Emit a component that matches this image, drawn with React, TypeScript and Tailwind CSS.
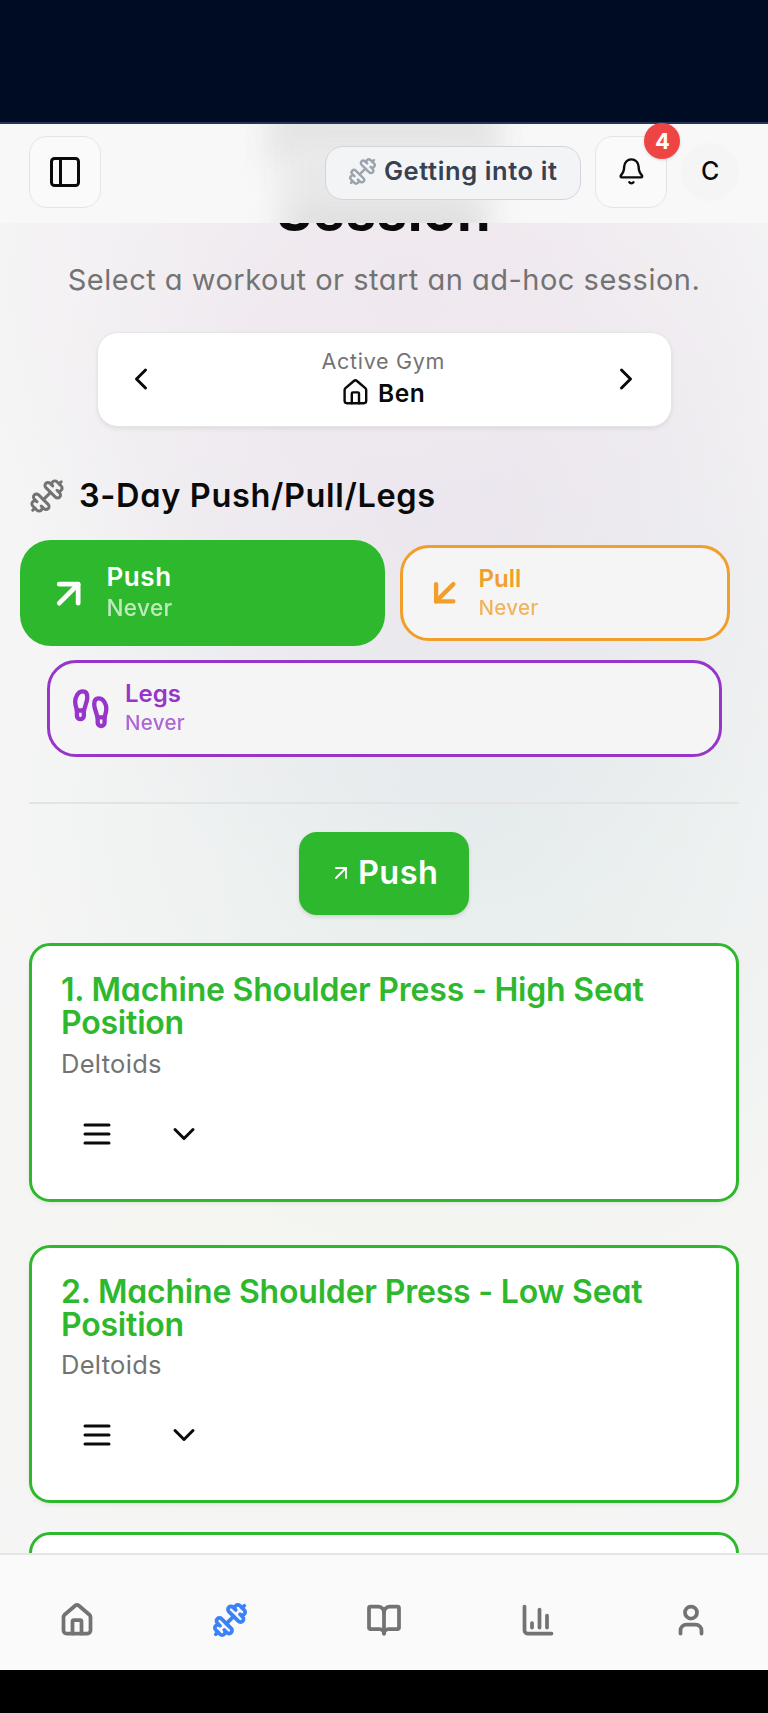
import type { ReactNode } from 'react';
import {
  ArrowDownLeft,
  ArrowUpRight,
  Bell,
  BookOpen,
  ChartColumn,
  ChevronDown,
  ChevronLeft,
  ChevronRight,
  Dumbbell,
  Footprints,
  House,
  PanelLeft,
  User,
} from 'lucide-react';

function MenuIcon() {
  return (
    <svg width="36" height="36" viewBox="0 0 24 24" fill="none" stroke="currentColor" strokeWidth="2" strokeLinecap="round">
      <path d="M4 6h16M4 12h16M4 18h16" />
    </svg>
  );
}

function Header() {
  return (
    <header className="relative flex h-[99px] shrink-0 items-start bg-[#f8f8f9] pr-[29px] pl-[29px] pt-[12px]">
      <div className="absolute inset-0 overflow-hidden">
        <div className="absolute top-[-24px] left-[268px] h-[64px] w-[232px] bg-[#e4e4e4] blur-[16px]" />
        <div className="absolute top-[20px] left-[286px] h-[60px] w-[196px] bg-[#e9e9e9] blur-[16px]" />
        <div className="absolute top-[74px] left-[284px] h-[50px] w-[202px] bg-[#dfdfdf] blur-[16px]" />
      </div>
      <button className="relative flex h-[72px] w-[72px] items-center justify-center rounded-[18px] border-[1.5px] border-[#e5e5e5] bg-[#fafafa]">
        <PanelLeft size={36} strokeWidth={2} />
      </button>
      <div className="relative mt-[9.5px] ml-auto flex h-[54px] w-[256px] items-center rounded-[18px] border-[1.5px] border-[#d1d5db] bg-[#f3f4f6] pl-[22px] text-[#374151]">
        <Dumbbell size={29} strokeWidth={2} className="mt-[-2px] shrink-0 text-[#9ca3af]" />
        <span className="mt-[-3px] ml-[6.5px] text-[25.5px] leading-[34px] font-semibold tracking-[0.6px] whitespace-nowrap">Getting into it</span>
      </div>
      <button className="relative ml-[14px] flex h-[72px] w-[72px] items-center justify-center rounded-[18px] border-[1.5px] border-[#e5e5e5] bg-[#fafafa]">
        <Bell size={28.8} strokeWidth={2} className="mt-[-1px]" />
        <span className="absolute top-[-14px] right-[-14px] flex h-[36px] w-[36px] items-center justify-center rounded-full bg-[#ef4444] text-[22px] leading-none font-bold text-white shadow-[0_1px_3px_rgba(0,0,0,0.15)]">
          4
        </span>
      </button>
      <div className="relative mt-[7px] ml-[14px] flex h-[57.6px] w-[57.6px] items-center justify-center rounded-full bg-[#f5f5f5] text-[25px] leading-none font-medium">
        C
      </div>
    </header>
  );
}

function GymPicker() {
  return (
    <section className="mx-auto mt-[32px] flex h-[95px] w-[575px] shrink-0 items-center justify-between rounded-[21px] border-[1.5px] border-[#e5e5e5] bg-white pr-[26.5px] pl-[25px] shadow-[0_2px_4px_rgba(0,0,0,0.07)]">
      <ChevronLeft size={36} strokeWidth={2} />
      <div className="mt-[-3px] flex flex-col items-center">
        <span className="text-[21.5px] leading-[30px] tracking-[0.7px] text-[#737373]">Active Gym</span>
        <span className="flex items-center gap-[8px] text-[24.5px] leading-[34px] font-semibold tracking-[0.5px]">
          <House size={28.8} strokeWidth={2} />
          Ben
        </span>
      </div>
      <ChevronRight size={36} strokeWidth={2} />
    </section>
  );
}

function SmallDay({ name, icon, className }: { name: string; icon: ReactNode; className: string }) {
  return (
    <button className={`flex h-[96.5px] shrink-0 items-start rounded-[29px] border-[3px] bg-[#f5f5f5] pl-[20.5px] text-left ${className}`}>
      <span className="mt-[24.5px] shrink-0">{icon}</span>
      <span className="mt-[16px] ml-[13.5px] flex flex-col">
        <span className="text-[24px] leading-[30px] font-semibold">{name}</span>
        <span className="mt-[1px] text-[20.5px] leading-[26px] font-medium tracking-[0.3px] opacity-75">Never</span>
      </span>
    </button>
  );
}

function ExerciseCard({ title, className }: { title: string; className: string }) {
  return (
    <article className={`mx-[29px] h-[258.5px] shrink-0 rounded-[21px] border-[3px] border-[#2eb82e] bg-white pl-[29px] shadow-[0_2px_4px_rgba(0,0,0,0.06)] ${className}`}>
      <h3 className="mt-[27px] text-[32px] leading-[33px] font-semibold tracking-[-0.2px] whitespace-pre-line text-[#2eb82e]">{title}</h3>
      <p className="mt-[5.5px] text-[25.5px] leading-[38px] tracking-[0.3px] text-[#737373]">Deltoids</p>
      <div className="mt-[33px] flex gap-[50.5px] pl-[18px]">
        <MenuIcon />
        <ChevronDown size={36} strokeWidth={2} />
      </div>
    </article>
  );
}

function BottomNav() {
  return (
    <nav className="grid h-[117px] shrink-0 grid-cols-5 justify-items-center border-t-2 border-[#e5e5e5] bg-[#fafafa] pt-[46.5px] text-[#737373]">
      <House size={36} strokeWidth={2.5} />
      <Dumbbell size={36} strokeWidth={2.5} className="text-[#3b82f6]" />
      <BookOpen size={36} strokeWidth={2.5} />
      <ChartColumn size={36} strokeWidth={2.5} />
      <User size={36} strokeWidth={2.5} />
    </nav>
  );
}

export default function App() {
  return (
    <div className="flex h-[1713px] w-[768px] flex-col overflow-hidden bg-black font-['Inter',sans-serif] text-[#0a0a0a] [font-feature-settings:'cv11']">
      <div className="h-[124px] shrink-0 border-b-2 border-[#26335a] bg-[#000c24]" />
      <Header />
      <main className="flex h-[1330px] shrink-0 flex-col overflow-hidden bg-[#f5f5f5] bg-[radial-gradient(ellipse_440px_420px_at_400px_60px,#f0e8ef_0%,#f0e8ef00_100%),radial-gradient(ellipse_440px_420px_at_460px_280px,#e8e5ed_0%,#e8e5ed00_100%),radial-gradient(ellipse_480px_460px_at_480px_590px,#e5edec_0%,#e5edec00_100%),radial-gradient(ellipse_620px_420px_at_340px_1020px,#f4f6f0_0%,#f4f6f000_100%)]">
        <h1 className="mt-[-38.5px] shrink-0 text-center text-[54px] leading-[54px] font-bold tracking-[0.8px]">Session</h1>
        <p className="mt-[21px] shrink-0 text-center text-[29px] leading-[40px] tracking-[0.5px] whitespace-nowrap text-[#737373]">
          Select a workout or start an ad-hoc session.
        </p>
        <GymPicker />
        <h2 className="mt-[51px] flex shrink-0 items-center text-[32.5px] leading-[36px] font-semibold tracking-[0.65px]">
          <Dumbbell size={36} strokeWidth={2} className="ml-[28.5px] text-[#737373]" />
          <span className="ml-[14.5px]">3-Day Push/Pull/Legs</span>
        </h2>
        <div className="mt-[26.5px] ml-[20px] flex shrink-0 items-center gap-[15px]">
          <button className="flex h-[106px] w-[365px] shrink-0 items-start rounded-[31px] bg-[#2eb82e] pl-[26px] text-left text-white">
            <ArrowUpRight size={45.4} strokeWidth={2.5} className="mt-[30.5px]" />
            <span className="mt-[21px] ml-[15px] flex flex-col">
              <span className="text-[26px] leading-[32px] font-semibold tracking-[0.6px]">Push</span>
              <span className="mt-[1px] text-[22.5px] leading-[28px] font-medium tracking-[0.4px] opacity-70">Never</span>
            </span>
          </button>
          <SmallDay name="Pull" className="w-[330px] border-[#f09f2b] text-[#f09f2b]" icon={<ArrowDownLeft size={41.5} strokeWidth={2.5} />} />
        </div>
        <SmallDay name="Legs" className="mx-[46.5px] mt-[14px] border-[#9735cb] text-[#9735cb]" icon={<Footprints size={41.5} strokeWidth={2.5} />} />
        <hr className="mx-[29px] mt-[45px] h-[2px] shrink-0 border-0 bg-[#e3e3e4]" />
        <div className="mx-auto mt-[28px] flex h-[83px] w-[170px] shrink-0 items-center rounded-[18px] bg-[#2eb82e] pl-[29.5px] text-[32.5px] leading-[36px] font-semibold text-white shadow-[0_2px_4px_rgba(0,0,0,0.12)]">
          <ArrowUpRight size={24} strokeWidth={1.8} />
          <span className="ml-[5.5px] tracking-[0.4px]">Push</span>
        </div>
        <ExerciseCard title={'1. Machine Shoulder Press - High Seat\nPosition'} className="mt-[28.5px]" />
        <ExerciseCard title={'2. Machine Shoulder Press - Low Seat\nPosition'} className="mt-[43px]" />
        <div className="mx-[29px] mt-[28.5px] h-[258.5px] shrink-0 rounded-[21px] border-[3px] border-[#2eb82e] bg-white" />
      </main>
      <BottomNav />
    </div>
  );
}
